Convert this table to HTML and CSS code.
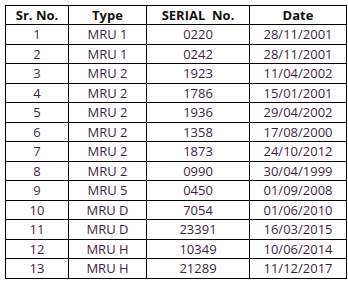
FILE: index.html
```html
<!DOCTYPE html>
<html>

<head>
    <title>Serial list</title>
    <link rel="stylesheet" href="styles.css">
</head>

<body>
    <table class="serials">
        <thead>
            <tr>
                <th class="col-sr">Sr. No.</th>
                <th class="col-type">Type</th>
                <th class="col-serial">SERIAL&nbsp; No.</th>
                <th class="col-date">Date</th>
            </tr>
        </thead>
        <tbody>
            <tr><td>1</td><td>MRU 1</td><td>0220</td><td>28/11/2001</td></tr>
            <tr><td>2</td><td>MRU 1</td><td>0242</td><td>28/11/2001</td></tr>
            <tr><td>3</td><td>MRU 2</td><td>1923</td><td>11/04/2002</td></tr>
            <tr><td>4</td><td>MRU 2</td><td>1786</td><td>15/01/2001</td></tr>
            <tr><td>5</td><td>MRU 2</td><td>1936</td><td>29/04/2002</td></tr>
            <tr><td>6</td><td>MRU 2</td><td>1358</td><td>17/08/2000</td></tr>
            <tr><td>7</td><td>MRU 2</td><td>1873</td><td>24/10/2012</td></tr>
            <tr><td>8</td><td>MRU 2</td><td>0990</td><td>30/04/1999</td></tr>
            <tr><td>9</td><td>MRU 5</td><td>0450</td><td>01/09/2008</td></tr>
            <tr><td>10</td><td>MRU D</td><td>7054</td><td>01/06/2010</td></tr>
            <tr><td>11</td><td>MRU D</td><td>23391</td><td>16/03/2015</td></tr>
            <tr><td>12</td><td>MRU H</td><td>10349</td><td>10/06/2014</td></tr>
            <tr><td>13</td><td>MRU H</td><td>21289</td><td>11/12/2017</td></tr>
        </tbody>
    </table>
</body>

</html>
```

FILE: styles.css
```css
body {
    margin: 0;
    padding: 5px 0 0 5px;
    background: #fff;
    font-family: "Open Sans", "Liberation Sans", sans-serif;
}

.serials {
    border-collapse: collapse;
    table-layout: fixed;
    width: 339px;
    font-size: 13px;
}

.serials th,
.serials td {
    border: 1px solid #000;
    padding: 0;
    text-align: center;
    white-space: nowrap;
}

.serials th {
    height: 16px;
    font-weight: bold;
    color: #111;
}

.serials td {
    height: 18.5px;
    line-height: 18px;
    color: #3d1f40;
}

.col-sr {
    width: 62px;
}

.col-type {
    width: 77px;
}

.col-serial {
    width: 102px;
}

.col-date {
    width: 96px;
}
```
